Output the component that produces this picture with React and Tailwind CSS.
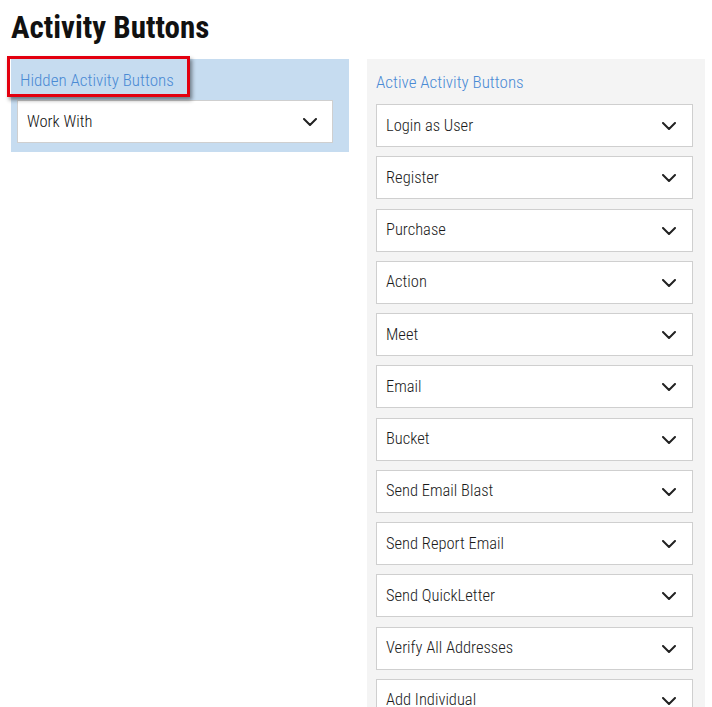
const active = [
  'Login as User',
  'Register',
  'Purchase',
  'Action',
  'Meet',
  'Email',
  'Bucket',
  'Send Email Blast',
  'Send Report Email',
  'Send QuickLetter',
  'Verify All Addresses',
  'Add Individual',
]

function Chevron() {
  return (
    <svg width="14" height="8" viewBox="0 0 14 8" fill="none" className="shrink-0">
      <polyline points="1,1 7,7 13,1" stroke="#222" strokeWidth="2" strokeLinecap="round" strokeLinejoin="round" />
    </svg>
  )
}

function Row({ label }) {
  return (
    <div className="flex h-[43px] items-center justify-between border border-[#cfcfcf] bg-white pl-[9px] pr-[16px] pt-[1px] text-[16.5px] font-[350] text-[#1a1a1a]">
      <span>{label}</span>
      <Chevron />
    </div>
  )
}

export default function App() {
  return (
    <div className="h-[707px] overflow-hidden bg-white font-['Roboto',sans-serif] [font-stretch:condensed]">
      <h1 className="pl-[11px] pt-[6px] text-[31px] font-bold leading-[44px] text-[#111]">
        Activity Buttons
      </h1>
      <div className="mt-[9px] flex items-start gap-[18px] pl-[11px]">
        <div className="relative w-[338px] bg-[#c6dcf0] pb-[9px] pl-[6px] pr-[16px]">
          <div className="flex h-[41px] items-center pl-[3px] pt-[3px] text-[17px] font-[350] text-[#4a8ad4]">
            Hidden Activity Buttons
          </div>
          <div className="flex h-[43px] items-center justify-between border border-[#cfcfcf] bg-white pl-[9px] pr-[15px] pt-[1px] text-[16.5px] font-[350] text-[#111]">
            <span>Work With</span>
            <Chevron />
          </div>
          <div className="absolute left-[-4px] top-[-3px] h-[41px] w-[183px] border-[3px] border-[#e3000f] shadow-[2px_3px_4px_rgba(0,0,0,0.45)]" />
        </div>
        <div className="flex w-[338px] flex-col bg-[#f4f4f4] pb-[10px] pl-[9px] pr-[12px]">
          <div className="flex h-[45px] items-center pt-[3px] text-[17px] font-[350] text-[#4a8ad4]">
            Active Activity Buttons
          </div>
          <div className="flex flex-col gap-[9.25px]">
            {active.map((a) => (
              <Row key={a} label={a} />
            ))}
          </div>
        </div>
      </div>
    </div>
  )
}
